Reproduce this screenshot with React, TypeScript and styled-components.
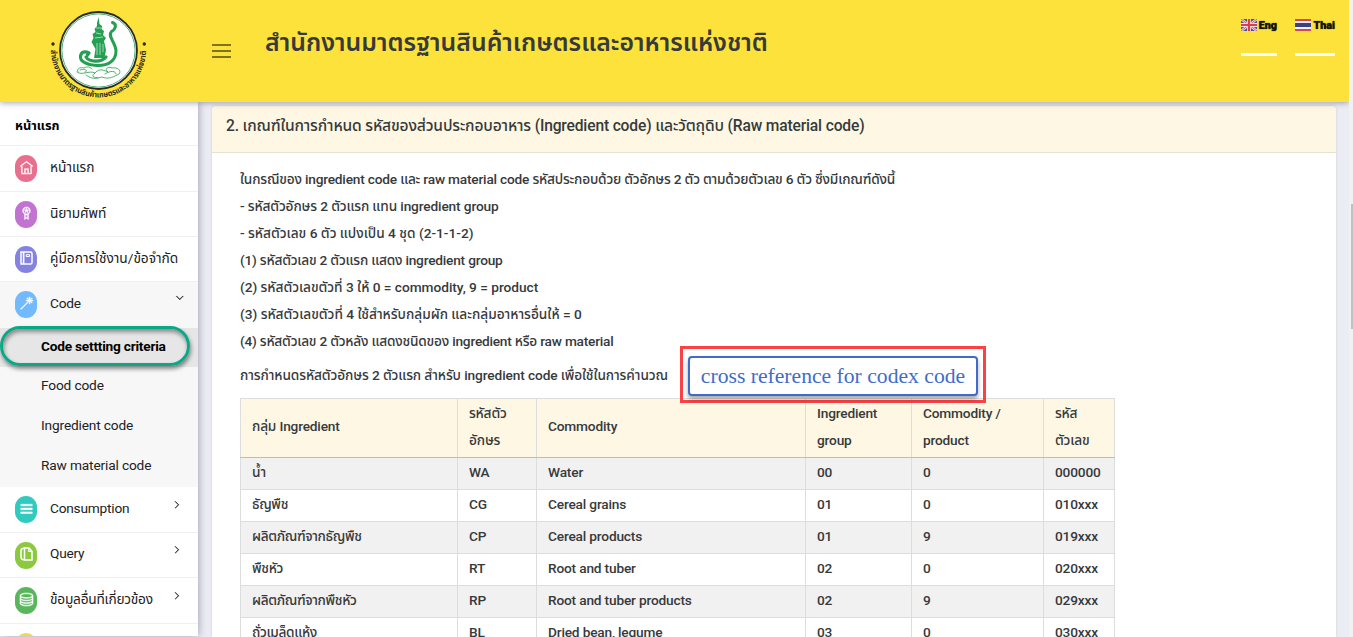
import React from 'react';
import styled, { createGlobalStyle } from 'styled-components';
import {
  TfiHome, TfiMedall, TfiWand, TfiMenu, TfiServer, TfiAngleRight, TfiAngleDown,
} from 'react-icons/tfi';

const GlobalStyle = createGlobalStyle`
  * { box-sizing: border-box; }
  html, body { margin: 0; height: 100%; overflow: hidden; }
  body {
    background: #ecedf4;
    color: #373a3c;
    font-family: Roboto, "Noto Sans", "Noto Sans Thai", sans-serif;
    font-size: 13.7px;
  }
`;

const Page = styled.div`
  display: flex;
  height: 637px;
  width: 1353px;
  overflow: hidden;
`;
const Main = styled.div`
  display: flex;
  flex-direction: column;
  width: 1349px;
`;
const ScrollTrack = styled.div`
  position: relative;
  z-index: 5;
  width: 4px;
  background: #f1f1f1;
  padding: 204px 0 0 2px;
`;
const ScrollThumb = styled.div`
  height: 125px;
  background: #c1c1c1;
`;
const Header = styled.header`
  display: flex;
  flex: none;
  height: 102px;
  background: #fce23b;
  box-shadow: 0 1px 6px rgba(60, 60, 90, 0.45);
  z-index: 3;
`;
const LogoBox = styled.div`
  width: 212px;
  svg { display: block; }
`;
const Burger = styled.div`
  display: flex;
  flex-direction: column;
  gap: 4px;
  width: 19px;
  margin-top: 44px;
  height: 14px;
  span { height: 2px; background: #7f7220; }
`;
const Title = styled.h1`
  margin: 23px 0 0 34px;
  font-size: 24.8px;
  line-height: 40px;
  font-weight: 600;
  white-space: nowrap;
  flex: 1;
`;
const Languages = styled.nav`
  display: flex;
  gap: 18px;
  padding: 18px 14px 0 0;
`;
const Language = styled.a<{ $w: number }>`
  display: flex;
  justify-content: space-between;
  width: ${p => p.$w}px;
  height: 38px;
  border-bottom: 3px solid #fff;
  font: 900 10.8px/15px Roboto, sans-serif;
  color: #16140a;
  text-shadow: 0 0 1px #16140a;
  svg { margin-top: 1px; }
`;
const Body = styled.div`
  display: flex;
  flex: 1;
  min-height: 0;
`;
const Sidebar = styled.aside`
  width: 198px;
  height: 534px;
  flex: none;
  background: #fff;
  box-shadow: 1px 0 8px rgba(60, 60, 90, 0.4);
  overflow: hidden;
  z-index: 2;
`;
const SideTitle = styled.div`
  height: 44px;
  padding-left: 15px;
  font-weight: 700;
  font-size: 12.8px;
  line-height: 47px;
  color: #000;
  border-bottom: 1px solid #f0f0f0;
`;
const SideRow = styled.div<{ $h: number; $open?: boolean }>`
  display: flex;
  align-items: center;
  height: ${p => p.$h}px;
  padding: 0 14px 0 15px;
  color: #222;
  background: ${p => (p.$open ? '#f7f7f7' : '#fff')};
  border-bottom: 1px solid ${p => (p.$open ? '#f7f7f7' : '#f0f0f0')};
  white-space: nowrap;
`;
const Badge = styled.span<{ $c: string }>`
  display: flex;
  align-items: center;
  justify-content: center;
  flex: none;
  width: 22px;
  height: 27px;
  border-radius: 11px;
  margin-right: 13px;
  background: ${p => p.$c};
  color: #fff;
  font-size: 13px;
  svg { stroke: #fff; stroke-width: 0.7; overflow: visible; margin-top: -2px; }
`;
const SideLabel = styled.span<{ $ls?: number; $latin?: boolean }>`
  flex: 1;
  padding: 0 0 ${p => (p.$latin ? 4 : 2)}px 0;
  letter-spacing: ${p => p.$ls ?? -0.22}px;
`;
const Chevron = styled.span<{ $down?: boolean }>`
  font-size: 7.5px;
  margin-bottom: ${p => (p.$down ? 13 : 10)}px;
  margin-right: ${p => (p.$down ? 1 : 4)}px;
  line-height: 0;
  svg { stroke: #222; stroke-width: 1.2; overflow: visible; }
`;
const SubRow = styled.div<{ $h: number; $active?: boolean }>`
  height: ${p => p.$h}px;
  line-height: ${p => p.$h - (p.$active ? 2 : 4)}px;
  padding-left: 41px;
  color: ${p => (p.$active ? '#000' : '#222')};
  font-weight: ${p => (p.$active ? 700 : 400)};
  background: ${p => (p.$active ? '#e6e6e6' : '#f7f7f7')};
  letter-spacing: ${p => (p.$active ? -0.23 : -0.15)}px;
  position: relative;
`;
const GreenRing = styled.div`
  position: absolute;
  left: 0;
  top: -2px;
  width: 190px;
  height: 40px;
  border: 3px solid #0aa887;
  border-radius: 20px;
  box-shadow: 1px 3px 4px rgba(0, 0, 0, 0.45), inset 1px 3px 4px rgba(0, 0, 0, 0.4);
  z-index: 1;
`;
const Content = styled.main`
  flex: 1;
  padding: 4px 13px 0 14px;
`;
const Card = styled.section`
  height: 531px;
  overflow: hidden;
  background: #fff;
  border-radius: 4px 4px 0 0;
  box-shadow: 0 0 3px rgba(60, 60, 90, 0.18);
`;
const CardHeader = styled.h2`
  margin: 0;
  height: 47px;
  padding-left: 14px;
  font-size: 15.6px;
  letter-spacing: -0.16px;
  font-weight: 500;
  line-height: 40px;
  background: #fdf7e3;
  border-bottom: 1px solid #e6e2d2;
  border-radius: 4px 4px 0 0;
  white-space: nowrap;
`;
const CardBody = styled.div`
  padding: 13px 28px 0;
  font-weight: 500;
`;
const Line = styled.p<{ $ls: number }>`
  margin: 0;
  height: 27px;
  line-height: 27px;
  letter-spacing: ${p => p.$ls}px;
  white-space: nowrap;
`;
const RefLine = styled.div`
  display: flex;
  align-items: center;
  height: 43px;
`;
const RefText = styled.div`
  width: 440px;
  letter-spacing: -0.11px;
  margin-bottom: 3px;
  white-space: nowrap;
`;
const RedFrame = styled.div`
  position: relative;
  flex: none;
  width: 306px;
  height: 57px;
  margin-bottom: 5px;
  border: 3px solid #fb4144;
  padding: 7px 5px;
  z-index: 1;
`;
const RefButton = styled.button`
  display: block;
  width: 290px;
  height: 40px;
  padding: 0;
  border: 2px solid #3f6cc9;
  border-radius: 4px;
  background: #fff;
  color: #3f6cc9;
  font: 21.65px/36px "Liberation Serif", serif;
  white-space: nowrap;
  box-shadow: 0 3px 4px rgba(0, 0, 0, 0.35);
`;
const Table = styled.table`
  border-collapse: collapse;
  table-layout: fixed;
  width: 875px;
  letter-spacing: -0.18px;
  th, td {
    border: 1px solid #dcdddd;
    padding: 0 11px;
    text-align: left;
    font-weight: 500;
    white-space: nowrap;
  }
  th {
    height: 59px;
    line-height: 27px;
    background: #fdf7e3;
    border-bottom-color: #bdbdb6;
    padding-bottom: 3px;
  }
  td { height: 32px; line-height: 27px; padding-bottom: 2px; }
  td:first-child { letter-spacing: -0.35px; }
  tbody tr:nth-child(odd) { background: #f1f1f1; }
`;

const Logo = () => (
  <svg width="150" height="102" viewBox="0 0 150 102">
    <circle cx="98.5" cy="50.5" r="38.5" fill="#fff" stroke="#2b2a20" strokeWidth="1.8" />
    <circle cx="98.5" cy="50.5" r="36.6" fill="none" stroke="#3aa765" strokeWidth="0.9" />
    <g fill="none" stroke="#25a052" strokeLinecap="round" strokeLinejoin="round">
      <path d="M112.500 22.500C117 24 116 29 111.500 31.500C107 36 115.500 42 116 51C116 61 108 65.500 98 65.500C88 66 79.500 61 80.500 56.500" strokeWidth="3" />
      <path d="M80.500 56.500C81 52.500 84 50.500 89 53L86 57C89 62 101 63 106 57" strokeWidth="3.2" />
      <path d="M78 72C76 68 81 67 84 68C87 66 90 67 92 69M77 72C82 76 89 70 95 73C89 77 97 79 102 77C109 80 115 76 119 74C122 70 117 67 112 68C108 66 104 69 108 72C102 69 98 69 95 73M80 70C85 68 89 71 85 72M105 74C111 70 116 71 116 74M86 75C90 78 94 79 98 78" strokeWidth="0.8" />
    </g>
    <path d="M98.500 17L99.500 24L102 26L101.500 29L104 31L103 35L106 38L104 41L106 50L104.500 58L94 58L95.500 49L91.500 42L93.500 38L92.500 34L95.500 32L94.500 29L97 26L97 23Z" fill="#25a052" />
    <path d="M96 33l5 1M95 38l8-1M97 43v12M100 43v12M103 44v8M96 28h5M84 54l2 2" stroke="#d8f0e0" strokeWidth="0.7" />
    <circle cx="53" cy="44" r="1.7" fill="#2b2a20" />
    <circle cx="144.3" cy="44" r="1.7" fill="#2b2a20" />
    <path id="ring" d="M51 50A47.5 47.5 0 0 0 146 50" fill="none" />
    <text fontSize="8" fontWeight="700" fill="#2b2a20">
      <textPath href="#ring" textLength="148" lengthAdjust="spacingAndGlyphs">สำนักงานมาตรฐานสินค้าเกษตรและอาหารแห่งชาติ</textPath>
    </text>
  </svg>
);
const UkFlag = () => (
  <svg width="16" height="12" viewBox="0 0 16 12">
    <rect width="16" height="12" fill="#4a5596" />
    <path d="M0 0L16 12M16 0L0 12" stroke="#f1dfe4" strokeWidth="2.4" />
    <path d="M0 0L16 12M16 0L0 12" stroke="#d8505c" strokeWidth="0.9" />
    <path d="M8 0V12M0 6H16" stroke="#f1dfe4" strokeWidth="3.8" />
    <path d="M8 0V12M0 6H16" stroke="#d93f4b" strokeWidth="2.2" />
  </svg>
);
const ThaiFlag = () => (
  <svg width="16" height="12" viewBox="0 0 16 12">
    <rect width="16" height="12" fill="#d8474f" />
    <rect y="2" width="16" height="8" fill="#f3eef2" />
    <rect y="4" width="16" height="4" fill="#39427f" />
  </svg>
);
const ManualIcon = () => (
  <svg width="13" height="14" viewBox="0 0 13 14" fill="none">
    <path d="M1 1H10.500Q12 1 12 2.500V11.500Q12 13 10.500 13H1Z" strokeWidth="1.5" />
    <path d="M3.600 1V13" strokeWidth="1.6" />
    <path d="M6.200 3.700H9.500V5.500H6.200Z" strokeWidth="1" />
  </svg>
);
const PagesIcon = () => (
  <svg width="13" height="14" viewBox="0 0 13 14" fill="none">
    <path d="M4.500 1H9L12 4.200V13H4.500Z" strokeWidth="1.5" />
    <path d="M8.800 1V4.400H12" strokeWidth="1.2" />
    <path d="M4 1.300Q1 1.500 1 3.500V10Q1 12.500 4 12.700" strokeWidth="1.5" />
  </svg>
);

const lines: [string, number][] = [
  ['ในกรณีของ ingredient code และ raw material code รหัสประกอบด้วย ตัวอักษร 2 ตัว ตามด้วยตัวเลข 6 ตัว ซึ่งมีเกณฑ์ดังนี้', -0.2],
  ['- รหัสตัวอักษร 2 ตัวแรก แทน ingredient group', -0.14],
  ['- รหัสตัวเลข 6 ตัว แปงเป็น 4 ชุด (2-1-1-2)', 0],
  ['(1) รหัสตัวเลข 2 ตัวแรก แสดง ingredient group', -0.21],
  ['(2) รหัสตัวเลขตัวที่ 3 ให้ 0 = commodity, 9 = product', -0.03],
  ['(3) รหัสตัวเลขตัวที่ 4 ใช้สำหรับกลุ่มผัก และกลุ่มอาหารอื่นให้ = 0', -0.01],
  ['(4) รหัสตัวเลข 2 ตัวหลัง แสดงชนิดของ ingredient หรือ raw material', -0.22],
];
const rows = [
  ['น้ำ', 'WA', 'Water', '00', '0', '000000'],
  ['ธัญพืช', 'CG', 'Cereal grains', '01', '0', '010xxx'],
  ['ผลิตภัณฑ์จากธัญพืช', 'CP', 'Cereal products', '01', '9', '019xxx'],
  ['พืชหัว', 'RT', 'Root and tuber', '02', '0', '020xxx'],
  ['ผลิตภัณฑ์จากพืชหัว', 'RP', 'Root and tuber products', '02', '9', '029xxx'],
  ['ถั่วเมล็ดแห้ง', 'BL', 'Dried bean, legume', '03', '0', '030xxx'],
];

export default function App() {
  return (
    <>
      <GlobalStyle />
      <Page>
        <Main>
          <Header>
            <LogoBox><Logo /></LogoBox>
            <Burger><span /><span /><span /></Burger>
            <Title>สำนักงานมาตรฐานสินค้าเกษตรและอาหารแห่งชาติ</Title>
            <Languages>
              <Language $w={36}><UkFlag />Eng</Language>
              <Language $w={40}><ThaiFlag />Thai</Language>
            </Languages>
          </Header>
          <Body>
            <Sidebar>
              <SideTitle>หน้าแรก</SideTitle>
              <SideRow $h={46}><Badge $c="#ea6e8d"><TfiHome /></Badge><SideLabel $ls={0}>หน้าแรก</SideLabel></SideRow>
              <SideRow $h={45}><Badge $c="#c273d2"><TfiMedall /></Badge><SideLabel $ls={-0.1}>นิยามศัพท์</SideLabel></SideRow>
              <SideRow $h={45}><Badge $c="#8583e1"><ManualIcon /></Badge><SideLabel $ls={0}>คู่มือการใช้งาน/ข้อจำกัด</SideLabel></SideRow>
              <SideRow $h={46} $open><Badge $c="#73b9fd"><TfiWand /></Badge><SideLabel $latin>Code</SideLabel><Chevron $down><TfiAngleDown /></Chevron></SideRow>
              <SubRow $h={39} $active>Code settting criteria<GreenRing /></SubRow>
              <SubRow $h={40}>Food code</SubRow>
              <SubRow $h={40}>Ingredient code</SubRow>
              <SubRow $h={40}>Raw material code</SubRow>
              <SideRow $h={46}><Badge $c="#30cabf"><TfiMenu /></Badge><SideLabel $latin>Consumption</SideLabel><Chevron><TfiAngleRight /></Chevron></SideRow>
              <SideRow $h={45}><Badge $c="#8cc840"><PagesIcon /></Badge><SideLabel $latin>Query</SideLabel><Chevron><TfiAngleRight /></Chevron></SideRow>
              <SideRow $h={46}><Badge $c="#59b65c"><TfiServer /></Badge><SideLabel>ข้อมูลอื่นที่เกี่ยวข้อง</SideLabel><Chevron><TfiAngleRight /></Chevron></SideRow>
              <SideRow $h={45}><Badge $c="#f0d94d" /></SideRow>
            </Sidebar>
            <Content>
              <Card>
                <CardHeader>2. เกณฑ์ในการกำหนด รหัสของส่วนประกอบอาหาร (Ingredient code) และวัตถุดิบ (Raw material code)</CardHeader>
                <CardBody>
                  {lines.map(([text, spacing]) => <Line key={text} $ls={spacing}>{text}</Line>)}
                  <RefLine>
                    <RefText>การกำหนดรหัสตัวอักษร 2 ตัวแรก สำหรับ ingredient code เพื่อใช้ในการคำนวณ</RefText>
                    <RedFrame><RefButton>cross reference for codex code</RefButton></RedFrame>
                  </RefLine>
                  <Table>
                    <colgroup>
                      <col width="217" /><col width="79" /><col width="269" /><col width="106" /><col width="132" /><col width="71" />
                    </colgroup>
                    <thead>
                      <tr>
                        <th>กลุ่ม Ingredient</th><th>รหัสตัว<br />อักษร</th><th>Commodity</th>
                        <th>Ingredient<br />group</th><th>Commodity /<br />product</th><th>รหัส<br />ตัวเลข</th>
                      </tr>
                    </thead>
                    <tbody>
                      {rows.map(r => <tr key={r[1]}>{r.map((c, i) => <td key={i}>{c}</td>)}</tr>)}
                    </tbody>
                  </Table>
                </CardBody>
              </Card>
            </Content>
          </Body>
        </Main>
        <ScrollTrack><ScrollThumb /></ScrollTrack>
      </Page>
    </>
  );
}
